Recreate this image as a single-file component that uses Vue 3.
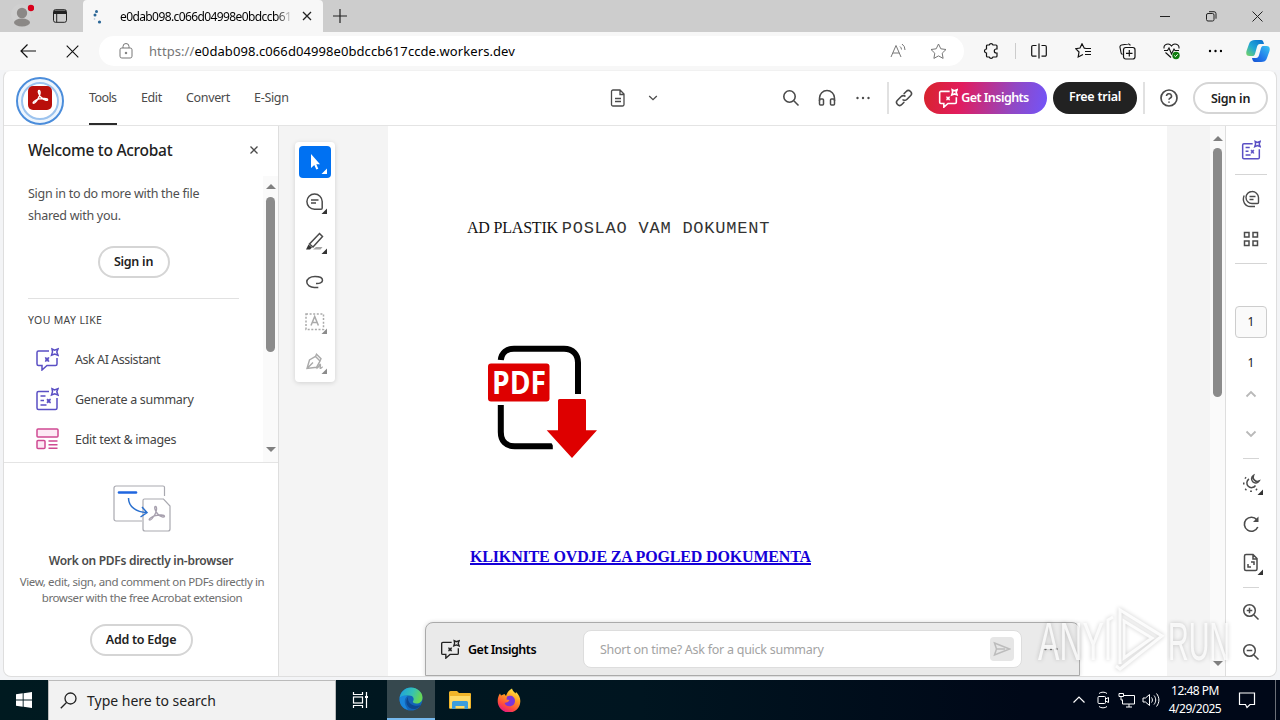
<template>
  <div class="desktop">
    <svg class="defs" width="0" height="0">
      <symbol id="chat-spark" viewBox="0 0 24 24">
        <path d="M14 4H3.500A1.500 1.500 0 0 0 2 5.500V17a1.500 1.500 0 0 0 1.500 1.500H7V23l5-4.500h8.500A1.500 1.500 0 0 0 22 17v-6" />
        <path d="M17 2l2.500 1.200L23 2l-1.200 3L23 8.300l-3.300-1.200L16.500 8.300l1-3.300z" />
        <path d="M10.300 10.500l1.700.700 2-.7-.7 2 .7 2-2-.7-1.700.7.500-2z" fill="currentColor" stroke-width=".8" />
      </symbol>
      <symbol id="note-spark" viewBox="0 0 24 24">
        <path d="M14 4.500H3.500A1.500 1.500 0 0 0 2 6v15a1.500 1.500 0 0 0 1.500 1.500h17A1.500 1.500 0 0 0 22 21V11" />
        <path d="M17 1.700l2.500 1.200L23 1.700l-1.200 3L23 8l-3.300-1.200L16.500 8l1-3.300z" />
        <path d="M5.500 9h5M5.500 13.500h3.500M5.500 18h6" />
        <path d="M12 12l1.500.600L15.500 12l-.7 2 .7 2-2-.7-1.500.7.500-2z" fill="currentColor" stroke-width=".8" />
      </symbol>
      <symbol id="acro" viewBox="0 0 24 24">
        <path d="M2 20c-2-1 4-5 8-6s12-1 12 1-5 1-9-3-5-10-3-10 2 6-1 11-5 8-7 7z" />
      </symbol>
    </svg>

    <div class="tabbar">
      <div class="cell profile">
        <svg width="24" height="26" viewBox="0 0 24 26">
          <circle cx="11" cy="11" r="10" fill="#d0d0d0" />
          <circle cx="12" cy="10" r="5.200" fill="#8b8886" />
          <ellipse cx="12" cy="19.500" rx="8" ry="4" fill="#8b8886" />
          <circle cx="21" cy="5" r="3.200" fill="#d9001b" />
        </svg>
      </div>
      <div class="cell tabs-icon">
        <svg class="ico" width="16" height="16" viewBox="0 0 16 16">
          <rect x="1.500" y="1.700" width="13" height="12.600" rx="2" />
          <path d="M2 3.500h12M2 5h12" stroke-width="1.800" />
          <path d="M4.700 5v9" />
        </svg>
      </div>
      <div class="tab">
        <svg width="14" height="16" viewBox="0 0 14 16">
          <g fill="#2b6696">
            <circle cx="6.500" cy="3.500" r="1.500" /><circle cx="5" cy="7" r="1.500" />
            <circle cx="9.500" cy="14" r="1.600" /><circle cx="4.500" cy="11" r=".8" opacity=".4" />
          </g>
        </svg>
        <span class="tab-title">e0dab098.c066d04998e0bdccb61</span>
        <svg class="ico" width="10" height="10" viewBox="0 0 10 10"><path d="M1 1l8 8M9 1L1 9" stroke-width="1.300" /></svg>
      </div>
      <div class="cell plus">
        <svg class="ico" width="14" height="14" viewBox="0 0 14 14"><path d="M7 0v14M0 7h14" stroke-width="1.200" /></svg>
      </div>
      <div class="window-buttons">
        <div class="wb"><svg class="ico" width="10" height="10" viewBox="0 0 10 10"><path d="M0 5.500h10" /></svg></div>
        <div class="wb">
          <svg class="ico" width="11" height="11" viewBox="0 0 11 11">
            <rect x=".5" y="2.500" width="7.500" height="7.500" rx="1.500" /><path d="M3 .7h5a2 2 0 0 1 2 2v5" />
          </svg>
        </div>
        <div class="wb"><svg class="ico" width="11" height="11" viewBox="0 0 11 11"><path d="M.5.5l10 10M10.500.5l-10 10" /></svg></div>
      </div>
    </div>

    <div class="toolbar">
      <div class="cell w44 back">
        <svg class="ico" width="16" height="14" viewBox="0 0 16 14"><path d="M7.500.5L1 7l6.500 6.500M1 7h15" stroke-width="1.200" /></svg>
      </div>
      <div class="cell w44">
        <svg class="ico" width="13" height="13" viewBox="0 0 13 13"><path d="M.7.700l11.600 11.600M12.300.7L.7 12.300" stroke-width="1.100" /></svg>
      </div>
      <div class="address">
        <svg class="ico gray" width="14" height="16" viewBox="0 0 14 16">
          <rect x="1" y="5" width="12" height="10" rx="1.800" />
          <path d="M4 5V3.500a3 3 0 0 1 6 0V5" /><circle cx="7" cy="10" r=".8" fill="#666" />
        </svg>
        <span class="url"><i>https://</i>e0dab098.c066d04998e0bdccb617ccde.workers.dev</span>
        <svg class="ico gray read" width="17" height="16" viewBox="0 0 17 16">
          <path d="M1 14L6 2.500 11 14M2.800 10h6.500M10 3.500a4 4 0 0 1 1.500 3M12 1a7 7 0 0 1 3 6" />
        </svg>
        <svg class="ico gray" width="17" height="17" viewBox="0 0 17 17">
          <path d="M8.500 1l2.300 4.800 5.200.700-3.800 3.700.9 5.200-4.600-2.500-4.600 2.500.9-5.200L1 6.500l5.200-.7z" />
        </svg>
      </div>
      <div class="cell ext">
        <svg class="ico" width="16" height="16" viewBox="0 0 16 16">
          <path d="M4.500 2h1.700a2 2 0 0 1 3.800 0h3a1 1 0 0 1 1 1v3h-.7a2 2 0 0 0 0 4h.7v3a1 1 0 0 1-1 1h-3a2 2 0 0 1-3.800 0H4.500a1 1 0 0 1-1-1v-3a2 2 0 0 1 0-4V3a1 1 0 0 1 1-1z" stroke-width="1.200" />
        </svg>
      </div>
      <div class="sep"></div>
      <div class="cell w44 split">
        <svg class="ico" width="16" height="16" viewBox="0 0 16 16"><path d="M5.500 2.500H2a1.300 1.300 0 0 0-1.300 1.300v8A1.300 1.300 0 0 0 2 13.200h3.500M10.500 2.500H14a1.300 1.300 0 0 1 1.300 1.300v8a1.300 1.300 0 0 1-1.300 1.400h-3.500M8 .5v15" stroke-width="1.200" /></svg>
      </div>
      <div class="cell w44">
        <svg class="ico" width="17" height="16" viewBox="0 0 17 16"><path d="M11 5.500l-1.700-.3L7 .8 5 5l-4.300.7L4 9l-.8 5L8 11.500M11 5.500h5M10 8.500h6M10 11.500h6" stroke-width="1.200" /></svg>
      </div>
      <div class="cell w44">
        <svg class="ico" width="17" height="17" viewBox="0 0 17 17"><path d="M3.500 11.500C2.500 11 2 10.500 2 9.500L1 4.500A2 2 0 0 1 2.500 2l6.500-1a2 2 0 0 1 2.300 1.500" stroke-width="1.100" /><rect x="4.500" y="4.500" width="11.500" height="11.500" rx="2.200" stroke-width="1.200" /><path d="M10.300 7v6.500M7 10.300h6.500" stroke-width="1.200" /></svg>
      </div>
      <div class="cell w44">
        <svg class="ico" width="18" height="18" viewBox="0 0 18 18"><path d="M2 6.500C1.500 2 7 .5 9.500 4 12 .5 17.500 2 17 6.500M3.500 10.500l5.500 5M2 8.500h3.500L7 6l2.500 6L12 7l1 1.500h4" stroke-width="1.100" /><circle cx="14" cy="13.500" r="3.700" fill="#107c10" stroke="none" /><path d="M12.300 13.500l1.200 1.200 2.200-2.400" stroke="#fff" /></svg>
      </div>
      <div class="cell w44">
        <svg width="14" height="4" viewBox="0 0 14 4"><circle cx="2" cy="2" r="1.200" /><circle cx="7.500" cy="2" r="1.200" /><circle cx="13" cy="2" r="1.200" /></svg>
      </div>
      <div class="cell copilot">
        <svg width="24" height="24" viewBox="0 0 24 24">
          <defs>
            <linearGradient id="cp1" x1="1" y1="0" x2="0" y2="1"><stop offset="0" stop-color="#086bce" /><stop offset=".55" stop-color="#22a7d6" /><stop offset="1" stop-color="#78d65e" /></linearGradient>
            <linearGradient id="cp2" x1="1" y1="0" x2="0" y2="1"><stop offset="0" stop-color="#37c5f1" /><stop offset=".6" stop-color="#2176ea" /><stop offset="1" stop-color="#1551d0" /></linearGradient>
          </defs>
          <path d="M9 1h6c2 0 2.500 2 3 4h-4c-2 0-2.600 1.500-3.200 3.500L9 15c-.6 1.700-1.500 2-3 2H3.500C.5 17-.2 15 .5 12L3 5c1-3 3-4 6-4z" fill="url(#cp1)" />
          <path d="M15 23H9c-2 0-2.500-2-3-4h4c2 0 2.600-1.500 3.200-3.500L15 9c.6-1.700 1.500-2 3-2h2.500c3 0 3.700 2 3 5L21 19c-1 3-3 4-6 4z" fill="url(#cp2)" />
        </svg>
      </div>
    </div>

    <main class="page">
      <header class="topbar">
        <div class="logo">
          <div class="ring">
            <span class="acrobat"><svg class="ico" width="17" height="17"><use href="#acro" stroke="#fff" stroke-width="2" /></svg></span>
          </div>
        </div>
        <nav class="menu">
          <a class="m1 active">Tools</a><a class="m2">Edit</a><a class="m3">Convert</a><a class="m4">E-Sign</a>
        </nav>
        <div class="file-menu">
          <svg class="ico dark" width="16" height="18" viewBox="0 0 16 18"><path d="M3 1h7l4 4v10.500a1.500 1.500 0 0 1-1.500 1.500H3a1.500 1.500 0 0 1-1.500-1.500v-13A1.500 1.500 0 0 1 3 1zM10 1v4.500h4M5 9.500h6M5 12.500h6" stroke-width="1.300" /></svg>
          <svg class="ico dark" width="10" height="6" viewBox="0 0 10 6"><path d="M1.200 1L5 4.700 8.800 1" stroke-width="1.300" /></svg>
        </div>
        <div class="top-actions">
          <div class="cell w36"><svg class="ico dark" width="18" height="18" viewBox="0 0 18 18"><circle cx="7.500" cy="7.500" r="5.700" stroke-width="1.600" /><path d="M11.800 11.800l4.700 4.700" stroke-width="1.600" /></svg></div>
          <div class="cell w36"><svg class="ico dark" width="18" height="18" viewBox="0 0 18 18"><path d="M1.500 12V9a7.500 7.500 0 0 1 15 0v3" stroke-width="1.500" /><rect x="1.500" y="10" width="4" height="6" rx="1" stroke-width="1.500" /><rect x="12.500" y="10" width="4" height="6" rx="1" stroke-width="1.500" /></svg></div>
          <div class="cell w36"><svg width="16" height="4" viewBox="0 0 16 4" fill="#4b4b4b"><circle cx="2.500" cy="2" r="1.200" /><circle cx="8" cy="2" r="1.200" /><circle cx="13.500" cy="2" r="1.200" /></svg></div>
          <div class="vline v1"></div>
          <svg class="ico dark link" width="18" height="18" viewBox="0 0 18 18"><path d="M7.500 10.500a3 3 0 0 0 4.300 0l3.700-3.700a3 3 0 0 0-4.300-4.300L8.700 5M10.500 7.500a3 3 0 0 0-4.300 0L2.500 11.200a3 3 0 0 0 4.300 4.300L9.300 13" stroke-width="1.600" /></svg>
          <button class="pill insights"><svg class="ico" width="20" height="20"><use href="#chat-spark" stroke-width="1.900" /></svg><span>Get Insights</span></button>
          <button class="pill trial">Free trial</button>
          <div class="vline v2"></div>
          <svg class="ico dark help" width="20" height="20" viewBox="0 0 20 20"><circle cx="10" cy="10" r="8" stroke-width="1.700" /><path d="M7.500 8a2.500 2.300 0 1 1 3.500 2.200c-.7.300-1 .8-1 1.500M10 13.500v1.300" stroke-width="1.600" /></svg>
          <button class="pill outline signin-top">Sign in</button>
        </div>
      </header>

      <div class="content">
        <aside class="side">
          <div class="side-head">
            <h3>Welcome to Acrobat</h3>
            <svg class="ico dark" width="8" height="8" viewBox="0 0 8 8"><path d="M.5.500l7 7M7.500.5l-7 7" stroke-width="1.300" /></svg>
          </div>
          <div class="side-scroll">
            <div class="side-body">
              <p class="lead">Sign in to do more with the file<br />shared with you.</p>
              <button class="pill outline signin-side">Sign in</button>
              <hr />
              <h4>YOU MAY LIKE</h4>
              <ul>
                <li><svg class="ico violet" width="24" height="24"><use href="#chat-spark" stroke-width="1.500" /></svg><span>Ask AI Assistant</span></li>
                <li><svg class="ico violet" width="24" height="24"><use href="#note-spark" stroke-width="1.500" /></svg><span class="wide">Generate a summary</span></li>
                <li>
                  <svg class="ico pink" width="24" height="24" viewBox="0 0 24 24"><rect x="2" y="2" width="21" height="8" rx="1" /><rect x="2" y="13.500" width="8" height="8" rx="1" /><path d="M13.500 14H22.500M13.500 17.700H22.500M13.500 21.300H22.500" /></svg>
                  <span class="wide">Edit text &amp; images</span>
                </li>
              </ul>
            </div>
            <div class="scrollbar side-bar"><b class="up"></b><b class="thumb"></b><b class="down"></b></div>
          </div>
          <div class="promo">
            <svg class="ico illustration" width="58" height="48" viewBox="0 0 58 48">
              <g stroke="#a9a9b0" stroke-width="1.200">
                <path d="M29 36H3a2 2 0 0 1-2-2V3a2 2 0 0 1 2-2h47a1.500 1.500 0 0 1 1.500 1.500V11" />
                <path d="M31.500 14h19l6.500 7v23a2 2 0 0 1-2 2H32a2 2 0 0 1-2-2V15.500A1.500 1.500 0 0 1 31.500 14z" />
              </g>
              <path d="M6 7.500h17" stroke="#1f66df" stroke-width="2.600" stroke-linecap="round" />
              <path d="M15.500 13c0 9 8 14 18 14.500M29 22l5 5.500-6.500 4.500" stroke="#2a70cf" stroke-width="1.500" />
              <use href="#acro" x="35" y="19" width="18" height="20" stroke="#a7a0ae" stroke-width="1.800" />
            </svg>
            <h5>Work on PDFs directly in-browser</h5>
            <p>View, edit, sign, and comment on PDFs directly in<br />browser with the free Acrobat extension</p>
            <button class="pill outline add">Add to Edge</button>
          </div>
        </aside>

        <section class="viewer">
          <div class="gutter">
            <div class="palette">
              <div class="tool selected"><svg width="32" height="32" viewBox="0 0 32 32"><path d="M12 8v14l3.300-3 2 4.600 2-.9-2-4.500H21z" fill="#fff" /><path d="M28 22.500V28h-5.500z" fill="#fff" /></svg></div>
              <div class="tool"><svg class="ico dark" width="32" height="32" viewBox="0 0 32 32"><path d="M15.500 8a7.500 7.500 0 1 0 0 15.200H22a1.300 1.300 0 0 0 1.200-1.300v-6.300A7.600 7.600 0 0 0 15.500 8zM12 14h7.500M12 17h5" stroke-width="1.500" /><path d="M28 22.500V28h-5.500z" fill="#333" stroke="none" /></svg></div>
              <div class="tool"><svg class="ico dark" width="32" height="32" viewBox="0 0 32 32"><path d="M20.500 7.500l3 3-9.500 10.500-3.500-3z" stroke-width="1.500" /><path d="M7 23.500l2.500-5 3.500 3-2 2z" fill="#333" stroke="none" /><path d="M14 23.500l3-2.500h6.500l-2 2.500z" fill="#a5a5a5" stroke="none" /><path d="M28 22.500V28h-5.500z" fill="#333" stroke="none" /></svg></div>
              <div class="tool"><svg class="ico dark" width="32" height="32" viewBox="0 0 32 32"><path d="M17 17.500c3.500.3 6.500-1 6.500-3.300 0-2.500-3.500-3.700-7.500-3.700-5 0-8.200 2.500-8.200 5.500s3.500 5.500 7.500 5.500h4" stroke-width="1.500" /></svg></div>
              <div class="tool off"><svg class="ico" width="32" height="32" viewBox="0 0 32 32"><rect x="7" y="8" width="17.500" height="15.500" stroke-width="1.500" stroke-dasharray="2 1.600" /><path d="M12 19.500l3.700-9 3.700 9M13.200 16.500h5" stroke-width="1.500" /><path d="M28 22.500V28h-5.500z" fill="#8c8c8c" stroke="none" /></svg></div>
              <div class="tool off"><svg class="ico" width="32" height="32" viewBox="0 0 32 32"><path d="M8 22.500l2.500-8.500 6-3.500 4.500 4.500-3.500 6.300zM8 22.500l6-6M16.500 10.500l1-2.300 4.500 4.500-1 2.300M17.500 22.500c2 0 3-4.500 3.800-4.200.9.400-1 4 .2 4s1.200-1.500 2.200-1" stroke-width="1.400" /><path d="M28 22.500V28h-5.500z" fill="#8c8c8c" stroke="none" /></svg></div>
            </div>
          </div>
          <article class="sheet">
            <p class="sender">AD PLASTIK <span>POSLAO VAM DOKUMENT</span></p>
            <svg class="pdf" width="112" height="116" viewBox="0 0 112 116">
              <path d="M12.800 17C13.500 9.500 19 5.700 26 5.700h50c9 0 14 6 14 14V51" fill="none" stroke="#000" stroke-width="6" />
              <path d="M12.800 62v27c0 9 5 14.300 14 14.300h38" fill="none" stroke="#000" stroke-width="6" />
              <path d="M64 98l8 10h-2z" fill="#fff" stroke="#fff" stroke-width="3" />
              <rect x="0" y="20.500" width="61.500" height="38" rx="3" fill="#de0000" />
              <text x="4" y="51" textLength="54" lengthAdjust="spacingAndGlyphs">PDF</text>
              <path d="M71.500 56h25a1.500 1.500 0 0 1 1.500 1.500V87.300h11L84 115 58.700 87.300H70V57.500A1.500 1.500 0 0 1 71.500 56z" fill="#de0000" />
            </svg>
            <a class="cta">KLIKNITE OVDJE ZA POGLED DOKUMENTA</a>
          </article>
          <div class="gap"></div>
          <div class="scrollbar main-bar"><b class="up"></b><b class="thumb"></b><b class="down"></b></div>

          <div class="ask">
            <svg class="ico" width="20" height="20"><use href="#chat-spark" stroke-width="1.600" /></svg>
            <strong>Get Insights</strong>
            <div class="ask-input">
              <span>Short on time? Ask for a quick summary</span>
              <i><svg class="ico" width="18" height="16" viewBox="0 0 18 16"><path d="M1.500 2l15 6-15 6 2-6zM3.500 8H12" stroke="#bcbcbc" stroke-width="1.500" /></svg></i>
            </div>
            <svg class="more" width="16" height="4" viewBox="0 0 16 4" fill="#777"><circle cx="2.500" cy="2" r="1.200" /><circle cx="8" cy="2" r="1.200" /><circle cx="13.500" cy="2" r="1.200" /></svg>
          </div>
        </section>

        <aside class="rail">
          <div class="r r-first"><svg class="ico violet" width="20" height="20"><use href="#note-spark" stroke-width="1.800" /></svg></div>
          <hr />
          <div class="r r-comment"><svg class="ico dark" width="18" height="18" viewBox="0 0 18 18"><path d="M10 1.500a6 6 0 1 0 0 12h5.500a1 1 0 0 0 1-1V7.500A6.300 6.300 0 0 0 10 1.500zM7.500 6.500h6M7.500 9.500h4M2.200 5.500c-2.500 5.500 1 11 6 11H13" stroke-width="1.400" /></svg></div>
          <div class="r"><svg class="ico dark" width="16" height="16" viewBox="0 0 16 16"><path d="M1.500 1.500h4.500v4.500H1.500zM10 1.500h4.500v4.500H10zM1.500 10h4.500v4.500H1.500zM10 10h4.500v4.500H10z" stroke-width="1.500" /></svg></div>
          <hr class="h2" />
          <div class="page-box">1</div>
          <div class="page-total">1</div>
          <div class="r short"><svg class="ico pale" width="12" height="8" viewBox="0 0 12 8"><path d="M1.500 6.500L6 2l4.500 4.500" stroke-width="1.800" /></svg></div>
          <div class="r short2"><svg class="ico pale" width="12" height="8" viewBox="0 0 12 8"><path d="M1.500 1.500L6 6l4.500-4.500" stroke-width="1.800" /></svg></div>
          <hr class="small" />
          <div class="r r-theme"><svg class="ico dark" width="24" height="24" viewBox="0 0 24 24"><path d="M10 8a4.700 4.700 0 1 0 6.500 6.500M14.500 4.500a4 4 0 1 0 5.500 5.500 4.200 4.200 0 0 1-5.500-5.500z" stroke-width="1.500" /><path d="M4 12.500h1.500M6 6.500l1 .9M6.300 19l1-1M12 21v-1.500M18 19l-1-1" stroke-width="1.800" /><path d="M24 18.500V24h-5.500z" fill="#333" stroke="none" /></svg></div>
          <div class="r"><svg class="ico dark" width="18" height="18" viewBox="0 0 18 18"><path d="M15.800 12A7 7 0 1 1 14.800 4.800" stroke-width="1.600" /><path d="M16.500 1.500V7H11z" fill="#4b4b4b" stroke="none" /></svg></div>
          <div class="r r-fit"><svg class="ico dark" width="24" height="24" viewBox="0 0 24 24"><path d="M7 3.500h7l4 4V18a1.500 1.500 0 0 1-1.500 1.500H7A1.500 1.500 0 0 1 5.500 18V5A1.500 1.500 0 0 1 7 3.500zM14 3.500V8h4M9 13v3h3M12 11h3v3" stroke-width="1.500" /><path d="M24 18.500V24h-5.500z" fill="#333" stroke="none" /></svg></div>
          <hr class="small second" />
          <div class="r r-zoom"><svg class="ico dark" width="18" height="18" viewBox="0 0 18 18"><circle cx="7.500" cy="7.500" r="5.800" stroke-width="1.500" /><path d="M12 12l4.500 4.500M7.500 4.700v5.600M4.700 7.500h5.600" stroke-width="1.500" /></svg></div>
          <div class="r"><svg class="ico dark" width="18" height="18" viewBox="0 0 18 18"><circle cx="7.500" cy="7.500" r="5.800" stroke-width="1.500" /><path d="M12 12l4.500 4.500M4.700 7.500h5.600" stroke-width="1.500" /></svg></div>
        </aside>
      </div>

      <svg class="watermark" width="200" height="70" viewBox="0 0 200 70">
        <g class="wm-text">
          <text x="2" y="54" textLength="66" lengthAdjust="spacingAndGlyphs">ANY</text>
          <text x="132" y="54" textLength="62" lengthAdjust="spacingAndGlyphs">RUN</text>
        </g>
        <g class="wm-mark">
          <path d="M72 54V14l5-3M84 58V4l42 26-42 33-4-3" />
          <path d="M88 15l28 17-28 20z" />
        </g>
      </svg>
    </main>

    <footer class="taskbar">
      <div class="start"><svg width="16" height="16" viewBox="0 0 16 16" fill="#fff"><path d="M0 2.300L6.700 1.300v6.200H0zM7.600 1.200L16 0v7.500H7.600zM0 8.400h6.700v6.300L0 13.700zM7.600 8.400H16V16l-8.400-1.200z" /></svg></div>
      <div class="search">
        <svg class="ico" width="17" height="17" viewBox="0 0 17 17"><circle cx="10.500" cy="6.500" r="5.500" stroke-width="1.300" /><path d="M6.500 10.500L.8 16.200" stroke-width="1.300" /></svg>
        <span>Type here to search</span>
      </div>
      <div class="task view"><svg class="ico" width="18" height="16" viewBox="0 0 18 16"><path d="M1.500 0v2.500h9V0M1.500 16v-2.500h9V16M14.500 0v16" stroke-width="1.200" /><rect x="1.500" y="5" width="9" height="6" stroke-width="1.200" /><path d="M13 5h3" stroke-width="2" /></svg></div>
      <div class="task open">
        <svg width="24" height="24" viewBox="0 0 24 24">
          <defs>
            <linearGradient id="eg1" x1="0" y1="0" x2="1" y2=".3"><stop offset="0" stop-color="#1b9de2" /><stop offset=".6" stop-color="#35c1b4" /><stop offset="1" stop-color="#66d657" /></linearGradient>
          </defs>
          <circle cx="12" cy="12" r="11.500" fill="#1464b8" />
          <path d="M.5 12C1 5 6 .5 12 .5S23.500 5 23.500 10.500c0 4-3 6-6 6s-4-1.200-3.500-2.200c1.500-2 .7-5.800-4-5.800C5 8.500.8 10 .5 12z" fill="url(#eg1)" />
          <path d="M9 10c-3.500 4-1.500 12.500 7 12 2.500-.4 4.500-2 6-4-6 2.500-14-1-13-8z" fill="#0d478f" />
          <path d="M.5 12C1 9 5 7.500 8.500 9 5 11 4.500 17 9 22.800 3.500 22 .5 17 .5 12z" fill="#1a86dc" />
        </svg>
      </div>
      <div class="task">
        <svg width="22" height="20" viewBox="0 0 22 20"><path d="M0 2.500A1.500 1.500 0 0 1 1.500 1H8l2 2h11a1 1 0 0 1 1 1v14.500H0z" fill="#f0b52a" /><path d="M1 6h20v12.500H1z" fill="#ffdb68" /><path d="M3 12.500A1.500 1.500 0 0 1 4.500 11h13a1.500 1.500 0 0 1 1.500 1.500V19h-3.500v-3h-9v3H3z" fill="#3c9ede" /></svg>
      </div>
      <div class="task">
        <svg width="24" height="24" viewBox="0 0 24 24">
          <defs>
            <linearGradient id="ff" x1=".8" y1="0" x2=".3" y2="1"><stop offset="0" stop-color="#fff24a" /><stop offset=".4" stop-color="#ff9a20" /><stop offset=".75" stop-color="#ff4a3d" /><stop offset="1" stop-color="#e31587" /></linearGradient>
          </defs>
          <path d="M3 5.500l1 2L7.500 6 9 8c1-3 3-6 6-7.500.5 2 2 3.500 3.500 5l.5-1.500c3 3 4.500 6 4.300 9.500A11.300 11.300 0 0 1 .7 13C.7 10 1.500 7.500 3 5.500z" fill="url(#ff)" />
          <path d="M10 8.500c4-2 8 0 8 4.500a5.500 5.500 0 0 1-10.500 2L11 14l1.500-2-3-.5z" fill="#7b35d8" />
        </svg>
      </div>
      <div class="tray">
        <svg class="ico" width="24" height="16" viewBox="0 0 24 16"><path d="M6.500 10.500L12 5l5.500 5.500" stroke-width="1.200" /></svg>
        <svg class="ico" width="24" height="18" viewBox="0 0 24 18"><rect x="7" y="5.500" width="7.500" height="7" rx="1" /><path d="M14.500 8l3-1.500v5l-3-1.500M8 2.500c2-1.800 6-1.800 8 0M8 15.500c2 1.800 6 1.800 8 0" /></svg>
        <svg class="ico" width="24" height="18" viewBox="0 0 24 18"><path d="M9 4.500h10.500v8.500H7.500V9M11 16h6M14 13v3M4 2.500h4.500v3H4zM6 5.500V9h2" /></svg>
        <svg class="ico" width="24" height="18" viewBox="0 0 24 18"><path d="M4 7v4h2.500l4 3.500v-11l-4 3.500zM12.500 6.500c1.200 1.500 1.200 3.500 0 5M15 4.500c2.300 2.700 2.300 6.300 0 9M17.500 2.500c3.200 4 3.200 9 0 13" /></svg>
      </div>
      <div class="clock"><span>12:48 PM</span><span>4/29/2025</span></div>
      <svg class="ico notif" width="18" height="18" viewBox="0 0 18 18"><path d="M1.500 2h15v11.500H12L9 16.500l-1.500-3h-6z" stroke-width="1.200" /></svg>
      <div class="peek"></div>
    </footer>
  </div>
</template>

<script setup>
</script>

<style>
body {
  overflow: hidden;
}
</style>

<style scoped>
.desktop {
  width: 1280px;
  height: 720px;
  display: flex;
  flex-direction: column;
  background: #f3f4f6;
  font-family: "Noto Sans", "Open Sans", sans-serif;
  color: #222;
  box-sizing: border-box;
}
.desktop * {
  box-sizing: border-box;
}
svg {
  display: block;
  flex: none;
}
.defs {
  position: absolute;
}
.ico {
  fill: none;
  stroke: currentColor;
}
.dark {
  color: #4b4b4b;
}
.pale {
  color: #b9b9b9;
}
.violet {
  color: #5a4fc4;
}
.pink {
  color: #cf4a92;
  fill: #fdeaf5;
  stroke-width: 1.5;
}
.cell {
  display: flex;
  flex: none;
  align-items: center;
  justify-content: center;
}
.w44 {
  width: 44px;
}
.w36 {
  width: 36px;
}
button {
  font-family: inherit;
  padding: 0;
  border: 0;
}

/* browser tabs */
.tabbar {
  height: 32px;
  flex: none;
  display: flex;
  background: #cdcdcd;
}
.profile {
  width: 44px;
}
.tabs-icon {
  width: 32px;
}
.tab {
  width: 240px;
  margin-left: 7px;
  padding-left: 7px;
  display: flex;
  align-items: center;
  background: #f7f7f7;
  border-radius: 4px 4px 0 0;
}
.tab-title {
  width: 173px;
  margin: 0 9px 0 16px;
  white-space: nowrap;
  font-size: 12px;
  letter-spacing: -0.6px;
  color: #000;
  mask-image: linear-gradient(90deg, #000 90%, transparent);
}
.plus {
  width: 34px;
}
.window-buttons {
  display: flex;
  margin-left: auto;
}
.wb {
  width: 46px;
  display: flex;
  align-items: center;
  justify-content: center;
}

/* address row */
.toolbar {
  height: 38px;
  flex: none;
  display: flex;
  align-items: center;
  background: #f7f7f7;
  color: #111;
}
.back {
  margin-left: 6px;
}
.address {
  width: 865px;
  height: 30px;
  margin-left: 5px;
  padding: 0 17px 0 20px;
  display: flex;
  align-items: center;
  background: #fff;
  border-radius: 15px;
}
.gray {
  color: #777;
}
.url {
  margin-left: 16px;
  font-size: 13px;
  letter-spacing: 0.08px;
  color: #000;
  white-space: nowrap;
}
.url i {
  font-style: normal;
  color: #767676;
}
.read {
  margin-left: auto;
  margin-right: 23px;
}
.ext {
  width: 32px;
  margin-left: 11px;
}
.sep {
  width: 1px;
  height: 16px;
  margin-left: 8px;
  background: #ccc;
}
.split {
  margin-left: 1px;
}
.copilot {
  width: 42px;
}

/* acrobat web app */
.page {
  position: relative;
  width: 1274px;
  height: 607px;
  flex: none;
  margin-left: 3px;
  display: flex;
  flex-direction: column;
  background: #fff;
  border: 1px solid #dedede;
  border-top-color: #f1f1f1;
  border-radius: 8px;
  overflow: hidden;
}
.topbar {
  height: 55px;
  flex: none;
  display: flex;
  align-items: center;
  border-bottom: 1px solid #e4e4e4;
}
.logo {
  width: 48px;
  height: 48px;
  margin: 5px 0 0 12px;
  padding: 3px;
  border: 2px solid #4b8ddb;
  border-radius: 50%;
  background: #edf5fd;
}
.ring {
  width: 38px;
  height: 38px;
  display: flex;
  justify-content: center;
  padding-top: 2px;
  border: 2px solid #9cc3ee;
  border-radius: 50%;
  background: #fff;
}
.acrobat {
  width: 24px;
  height: 24px;
  display: flex;
  align-items: center;
  justify-content: center;
  background: #b90f0b;
  border-radius: 5px;
  flex: none;
}
.menu {
  align-self: stretch;
  margin-left: 25px;
  display: flex;
  font-size: 12.5px;
  color: #4b4b4b;
}
.menu a {
  height: 54px;
  padding-top: 18px;
  line-height: 18px;
  white-space: nowrap;
  margin-right: 24px;
}
.m1 {
  width: 28px;
  letter-spacing: -0.6px;
}
.m2 {
  width: 21px;
  letter-spacing: -0.4px;
}
.m3 {
  width: 44px;
  letter-spacing: -0.35px;
}
.m4 {
  width: 35px;
  letter-spacing: -0.3px;
}
.active {
  border-bottom: 2px solid #2c2c2c;
}
.file-menu {
  display: flex;
  align-items: center;
  gap: 22px;
  margin-left: 297px;
}
.top-actions {
  display: flex;
  align-items: center;
  margin-left: auto;
}
.vline {
  width: 2px;
  height: 32px;
  background: #e1e1e1;
}
.v1 {
  margin: 0 6px;
}
.v2 {
  margin: 0 14px 0 6px;
}
.link {
  margin-right: 11px;
}
.pill {
  height: 32px;
  border-radius: 16px;
  display: flex;
  align-items: center;
  justify-content: center;
  flex: none;
  font-size: 12.5px;
  font-weight: 600;
  letter-spacing: -0.25px;
  white-space: nowrap;
}
.insights {
  width: 123px;
  gap: 3px;
  padding: 0 4px 1px 0;
  margin-right: 6px;
  letter-spacing: -0.55px;
  color: #fff;
  background: linear-gradient(100deg, #d7242c, #e21c5d 30%, #9148c4 72%, #7155fa);
}
.trial {
  width: 84px;
  color: #fff;
  background: #222;
  padding-bottom: 3px;
}
.outline {
  background: #fff;
  border: 2px solid #d5d5d5;
  color: #222;
}
.help {
  margin-right: 14px;
}
.signin-top {
  width: 75px;
  margin-right: 8px;
}
.content {
  display: flex;
  flex: 1;
  min-height: 0;
}

/* left panel */
.side {
  width: 275px;
  flex: none;
  display: flex;
  flex-direction: column;
  border-right: 1px solid #dedede;
}
.side-head {
  height: 50px;
  padding: 0 20px 2px 24px;
  display: flex;
  align-items: center;
  justify-content: space-between;
}
.side-head h3 {
  margin: 0;
  font-size: 15.5px;
  font-weight: 500;
  letter-spacing: -0.28px;
}
.side-scroll {
  display: flex;
  height: 287px;
  border-bottom: 1px solid #e4e4e4;
}
.side-body {
  flex: 1;
  padding: 7px 0 0 24px;
}
.lead {
  margin: 0;
  font-size: 12.5px;
  line-height: 22px;
  color: #505050;
  letter-spacing: -0.28px;
}
.signin-side {
  width: 72px;
  margin: 19px 0 0 70px;
  padding: 0 1px 1px 0;
}
.side-body hr {
  width: 211px;
  margin: 20px 0 0;
  border: 0;
  border-top: 1px solid #e1e1e1;
}
.side-body h4 {
  margin: 13px 0 11px;
  font-size: 10.5px;
  line-height: 16px;
  font-weight: 400;
  letter-spacing: 0.35px;
  color: #444;
}
.side-body ul {
  margin: 0;
  padding: 0 0 0 7px;
  list-style: none;
}
.side-body li {
  height: 40px;
  display: flex;
  align-items: center;
  gap: 16px;
  font-size: 12.5px;
  color: #444;
  letter-spacing: -0.45px;
}
.side-body .wide {
  letter-spacing: -0.28px;
}
.scrollbar {
  width: 15px;
  display: flex;
  flex-direction: column;
  align-items: center;
  background: #fafafa;
}
.up,
.down {
  border: 5px solid transparent;
}
.up {
  border-top: 0;
  border-bottom-color: #808080;
}
.down {
  border-bottom: 0;
  border-top-color: #808080;
  margin-top: auto;
}
.thumb {
  width: 9px;
  border-radius: 5px;
  background: #8b8b8b;
}
.side-bar {
  padding: 8px 0 10px;
}
.side-bar .thumb {
  height: 155px;
  margin-top: 8px;
}
.promo {
  flex: 1;
  display: flex;
  flex-direction: column;
  align-items: center;
  padding-top: 22px;
}
.illustration {
  margin-left: 2px;
}
.promo h5 {
  margin: 20px 0 5px;
  font-size: 12px;
  line-height: 16px;
  font-weight: 600;
  letter-spacing: -0.28px;
  color: #4b4b4b;
}
.promo p {
  margin: 0;
  width: 275px;
  padding-left: 2px;
  text-align: center;
  font-size: 11.5px;
  line-height: 16px;
  letter-spacing: -0.4px;
  color: #6e6e6e;
  white-space: nowrap;
}
.add {
  width: 103px;
  margin-top: 18px;
  padding-bottom: 1px;
}

/* document viewer */
.viewer {
  position: relative;
  flex: 1;
  display: flex;
  background: #f4f4f4;
}
.gutter {
  width: 109px;
  padding: 16px 0 0 16px;
}
.palette {
  width: 40px;
  height: 240px;
  padding: 4px;
  display: flex;
  flex-direction: column;
  gap: 8px;
  background: #fff;
  border-radius: 4px;
  box-shadow: 0 1px 5px rgba(0, 0, 0, 0.14);
}
.tool {
  width: 32px;
  height: 32px;
  border-radius: 4px;
}
.selected {
  background: #0071f2;
}
.off {
  color: #aaa;
}
.sheet {
  width: 779px;
  padding: 92px 0 0 79px;
  background: #fff;
  font-family: "Liberation Serif", serif;
  color: #111;
}
.sender {
  margin: 0;
  height: 20px;
  line-height: 20px;
  font-size: 16px;
  letter-spacing: -0.2px;
  white-space: nowrap;
}
.sender span {
  font-family: "Liberation Mono", monospace;
  font-size: 17px;
  letter-spacing: 0.77px;
  color: #333;
}
.pdf {
  margin: 105px 0 0 21px;
}
.pdf text {
  font: 700 32px "Open Sans", sans-serif;
  fill: #fff;
}
.cta {
  display: block;
  margin: 88px 0 0 3px;
  font-size: 16px;
  line-height: 20px;
  font-weight: 700;
  letter-spacing: -0.16px;
  color: #1500d8;
  text-decoration: underline;
  text-decoration-thickness: 2px;
  white-space: nowrap;
}
.gap {
  flex: 1;
}
.main-bar {
  padding: 10px 0 10px;
}
.main-bar .thumb {
  height: 249px;
  margin-top: 7px;
}
.ask {
  position: absolute;
  left: 146px;
  bottom: 0;
  width: 655px;
  height: 54px;
  display: flex;
  align-items: center;
  padding-left: 14px;
  background: #eaeaea;
  border: 1px solid #aaa;
  border-radius: 8px 8px 0 0;
  box-shadow: 0 0 4px rgba(0, 0, 0, 0.15);
}
.ask strong {
  width: 106px;
  margin-left: 8px;
  font-size: 12.5px;
  font-weight: 600;
  letter-spacing: -0.5px;
  color: #000;
}
.ask-input {
  width: 439px;
  height: 38px;
  margin-left: 9px;
  padding: 0 7px 0 16px;
  display: flex;
  align-items: center;
  justify-content: space-between;
  background: #fff;
  border: 1px solid #ddd;
  border-radius: 8px;
  font-size: 12.5px;
  letter-spacing: -0.26px;
  color: #a3a3a3;
}
.ask-input i {
  width: 24px;
  height: 24px;
  display: flex;
  align-items: center;
  justify-content: center;
  background: #e6e6e6;
  border-radius: 4px;
}
.more {
  margin-left: 21px;
}

/* right rail */
.rail {
  width: 51px;
  flex: none;
  display: flex;
  flex-direction: column;
  align-items: center;
  border-left: 1px solid #dedede;
}
.rail hr {
  width: 32px;
  margin: 0;
  border: 0;
  border-top: 1px solid #d5d5d5;
}
.r {
  height: 40px;
  flex: none;
  display: flex;
  align-items: center;
}
.r-first {
  height: 48px;
}
.r-comment {
  margin-top: 4px;
}
.rail .h2 {
  margin-top: 4px;
}
.page-box {
  width: 32px;
  height: 32px;
  margin-top: 42px;
  line-height: 30px;
  text-align: center;
  font-size: 12px;
  background: #fafafa;
  border: 1px solid #cdcdcd;
  border-radius: 4px;
}
.page-total {
  height: 35px;
  margin-top: 7px;
  line-height: 36px;
  font-size: 12px;
}
.short {
  height: 28px;
}
.short2 {
  height: 52px;
}
.rail .small {
  width: 16px;
  margin-top: -2px;
}
.r-theme {
  margin: 4px 0 1px;
}
.r-fit {
  margin-top: -1px;
}
.rail .second {
  margin-top: 4px;
}
.r-zoom {
  margin-top: 4px;
}
.watermark {
  position: absolute;
  right: 40px;
  bottom: 0;
  overflow: visible;
  filter: drop-shadow(0 0 2px rgba(0, 0, 0, 0.24));
}
.wm-text {
  font: 400 53px "Liberation Sans", sans-serif;
  fill: rgba(255, 255, 255, 0.8);
}
.wm-mark {
  fill: none;
  stroke: rgba(255, 255, 255, 0.85);
  stroke-width: 3;
}

/* taskbar */
.taskbar {
  height: 40px;
  flex: none;
  margin-top: 3px;
  display: flex;
  align-items: center;
  background: linear-gradient(90deg, #001a20, #001520 50%, #000818 80%);
  color: #fff;
}
.start {
  width: 48px;
  display: flex;
  justify-content: center;
}
.search {
  width: 288px;
  height: 40px;
  padding-left: 11px;
  display: flex;
  align-items: center;
  gap: 10px;
  background: #f2f2f2;
  border: 1px solid #bbb;
  border-bottom: 0;
  color: #222;
  font-size: 14px;
  letter-spacing: 0;
}
.task {
  width: 49px;
  height: 40px;
  display: flex;
  align-items: center;
  justify-content: center;
}
.view {
  width: 51px;
  padding-right: 2px;
}
.open {
  width: 48px;
  background: #36484e;
  border-bottom: 2px solid #76b9ed;
}
.tray {
  display: flex;
  align-items: center;
  margin: 0 1px 0 auto;
}
.clock {
  width: 62px;
  display: flex;
  flex-direction: column;
  align-items: center;
  font-size: 12px;
  line-height: 18px;
  letter-spacing: -0.5px;
  white-space: nowrap;
}
.notif {
  margin: 0 19px 0 12px;
}
.peek {
  width: 5px;
  height: 40px;
  border-left: 1px solid #6b7078;
}
</style>
